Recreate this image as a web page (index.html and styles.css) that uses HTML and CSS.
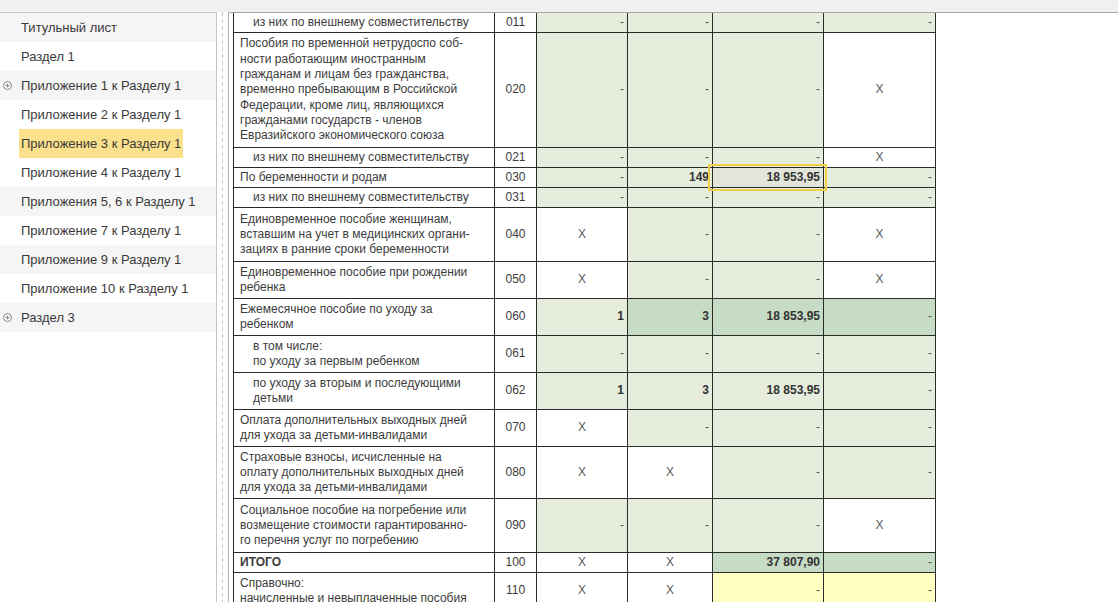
FILE: index.html
```html
<!DOCTYPE html>
<html lang="ru">
<head>
<meta charset="utf-8">
<title>Приложение 3 к Разделу 1</title>
<link rel="stylesheet" href="styles.css">
</head>
<body>
<div class="topbar"></div>
<div class="main">
  <nav class="sidebar">
    <div class="item alt"><span class="ico"></span><span class="lbl">Титульный лист</span></div>
    <div class="item"><span class="ico"></span><span class="lbl">Раздел 1</span></div>
    <div class="item alt"><span class="ico"><svg width="9" height="9" viewBox="0 0 9 9"><circle cx="4.5" cy="4.5" r="4" fill="none" stroke="#8a8a8a" stroke-width="1"/><path d="M2.5 4.5h4M4.5 2.5v4" stroke="#8a8a8a" stroke-width="1"/></svg></span><span class="lbl">Приложение 1 к Разделу 1</span></div>
    <div class="item"><span class="ico"></span><span class="lbl">Приложение 2 к Разделу 1</span></div>
    <div class="item"><span class="ico"></span><span class="lbl sel">Приложение 3 к Разделу 1</span></div>
    <div class="item"><span class="ico"></span><span class="lbl">Приложение 4 к Разделу 1</span></div>
    <div class="item alt"><span class="ico"></span><span class="lbl">Приложения 5, 6 к Разделу 1</span></div>
    <div class="item"><span class="ico"></span><span class="lbl">Приложение 7 к Разделу 1</span></div>
    <div class="item alt"><span class="ico"></span><span class="lbl">Приложение 9 к Разделу 1</span></div>
    <div class="item"><span class="ico"></span><span class="lbl">Приложение 10 к Разделу 1</span></div>
    <div class="item alt"><span class="ico"><svg width="9" height="9" viewBox="0 0 9 9"><circle cx="4.5" cy="4.5" r="4" fill="none" stroke="#8a8a8a" stroke-width="1"/><path d="M2.5 4.5h4M4.5 2.5v4" stroke="#8a8a8a" stroke-width="1"/></svg></span><span class="lbl">Раздел 3</span></div>
  </nav>
  <div class="splitter"></div>
  <div class="content">
    <table class="report">
      <colgroup>
        <col class="c-desc"><col class="c-code"><col class="c-a"><col class="c-b"><col class="c-c"><col class="c-d">
      </colgroup>
      <tbody>
        <tr class="h20">
          <td class="desc ind">из них по внешнему совместительству</td><td class="code">011</td>
          <td class="g num">-</td><td class="g num">-</td><td class="g num">-</td><td class="g num">-</td>
        </tr>
        <tr class="h115">
          <td class="desc">Пособия по временной нетрудоспо соб-<br>ности работающим иностранным<br>гражданам и лицам без гражданства,<br>временно пребывающим в Российской<br>Федерации, кроме лиц, являющихся<br>гражданами государств - членов<br>Евразийского экономического союза</td><td class="code">020</td>
          <td class="g num">-</td><td class="g num">-</td><td class="g num">-</td><td class="w x">X</td>
        </tr>
        <tr class="h20">
          <td class="desc ind">из них по внешнему совместительству</td><td class="code">021</td>
          <td class="g num">-</td><td class="g num">-</td><td class="g num">-</td><td class="w x">X</td>
        </tr>
        <tr class="h20">
          <td class="desc">По беременности и родам</td><td class="code">030</td>
          <td class="g num">-</td><td class="g num b">149</td><td class="cur num b">18 953,95</td><td class="g num">-</td>
        </tr>
        <tr class="h20">
          <td class="desc ind">из них по внешнему совместительству</td><td class="code">031</td>
          <td class="g num">-</td><td class="g num">-</td><td class="g num">-</td><td class="g num">-</td>
        </tr>
        <tr class="h54">
          <td class="desc">Единовременное пособие женщинам,<br>вставшим на учет в медицинских органи-<br>зациях в ранние сроки беременности</td><td class="code">040</td>
          <td class="w x">X</td><td class="g num">-</td><td class="g num">-</td><td class="w x">X</td>
        </tr>
        <tr class="h37">
          <td class="desc">Единовременное пособие при рождении<br>ребенка</td><td class="code">050</td>
          <td class="w x">X</td><td class="g num">-</td><td class="g num">-</td><td class="w x">X</td>
        </tr>
        <tr class="h37">
          <td class="desc">Ежемесячное пособие по уходу за<br>ребенком</td><td class="code">060</td>
          <td class="g num b">1</td><td class="dg num b">3</td><td class="dg num b">18 853,95</td><td class="dg num">-</td>
        </tr>
        <tr class="h37">
          <td class="desc ind">в том числе:<br>по уходу за первым ребенком</td><td class="code">061</td>
          <td class="g num">-</td><td class="g num">-</td><td class="g num">-</td><td class="g num">-</td>
        </tr>
        <tr class="h37">
          <td class="desc ind">по уходу за вторым и последующими<br>детьми</td><td class="code">062</td>
          <td class="g num b">1</td><td class="g num b">3</td><td class="g num b">18 853,95</td><td class="g num">-</td>
        </tr>
        <tr class="h37">
          <td class="desc">Оплата дополнительных выходных дней<br>для ухода за детьми-инвалидами</td><td class="code">070</td>
          <td class="w x">X</td><td class="g num">-</td><td class="g num">-</td><td class="g num">-</td>
        </tr>
        <tr class="h52">
          <td class="desc">Страховые взносы, исчисленные на<br>оплату дополнительных выходных дней<br>для ухода за детьми-инвалидами</td><td class="code">080</td>
          <td class="w x">X</td><td class="w x">X</td><td class="g num">-</td><td class="g num">-</td>
        </tr>
        <tr class="h54">
          <td class="desc">Социальное пособие на погребение или<br>возмещение стоимости гарантированно-<br>го перечня услуг по погребению</td><td class="code">090</td>
          <td class="g num">-</td><td class="g num">-</td><td class="g num">-</td><td class="w x">X</td>
        </tr>
        <tr class="h20">
          <td class="desc b">ИТОГО</td><td class="code">100</td>
          <td class="w x">X</td><td class="w x">X</td><td class="dg num b">37 807,90</td><td class="dg num">-</td>
        </tr>
        <tr class="h37">
          <td class="desc">Справочно:<br>начисленные и невыплаченные пособия</td><td class="code">110</td>
          <td class="w x">X</td><td class="w x">X</td><td class="y num">-</td><td class="y num">-</td>
        </tr>
      </tbody>
    </table>
  </div>
</div>
</body>
</html>
```

FILE: styles.css
```css
html, body {
  margin: 0;
  padding: 0;
  background: #ffffff;
  overflow: hidden;
}
body {
  width: 1118px;
  height: 602px;
  font-family: "Liberation Sans", Arial, sans-serif;
  color: #3c3c3c;
}
.topbar {
  height: 12px;
  background: #f0f0f0;
}
.main {
  display: flex;
  height: 590px;
}
.sidebar {
  width: 217px;
  flex: none;
  border-top: 1px solid #c8c8c8;
  border-right: 1px solid #c8c8c8;
  box-sizing: border-box;
  font-size: 13px;
  color: #3a3a3a;
}
.item {
  display: flex;
  align-items: center;
  height: 29px;
  background: #ffffff;
}
.item.alt {
  background: #f5f5f5;
}
.ico {
  width: 19px;
  flex: none;
  display: flex;
  align-items: center;
  padding-left: 3px;
  box-sizing: border-box;
}
.ico svg {
  display: block;
}
.lbl {
  display: block;
  height: 29px;
  line-height: 29px;
  padding: 0 2px;
  white-space: nowrap;
}
.lbl.sel {
  background: #fbe18c;
}
.splitter {
  width: 11px;
  flex: none;
  background-image: linear-gradient(to bottom, #c9c9c9 0, #c9c9c9 4px, transparent 4px, transparent 7px);
  background-size: 1px 7px;
  background-repeat: repeat-y;
  background-position: 5px 0;
}
.content {
  flex: 1;
  border-top: 1px solid #a6a6a6;
  border-left: 1px solid #b4b4b4;
  padding-left: 4px;
  overflow: hidden;
  background: #ffffff;
}
.report {
  border-collapse: collapse;
  table-layout: fixed;
  width: 703px;
  font-size: 12px;
  line-height: 15.3px;
  border: 1px solid #2a2a2a;
  margin-top: -1px;
}
.c-desc { width: 261px; }
.c-code { width: 42px; }
.c-a { width: 91px; }
.c-b { width: 85px; }
.c-c { width: 111px; }
.c-d { width: 112px; }
.report td {
  border: 1px solid #2a2a2a;
  padding: 0 3px;
  vertical-align: middle;
  white-space: nowrap;
  overflow: visible;
}
.h20 { height: 20px; }
.h37 { height: 37px; }
.h52 { height: 52px; }
.h54 { height: 54px; }
.h115 { height: 115px; }
.report td.desc {
  padding-left: 6px;
  color: #3c3c3c;
  background: #ffffff;
}
.report td.desc.ind {
  padding-left: 19px;
}
.report td.code {
  text-align: center;
  color: #3c3c3c;
  background: #ffffff;
}
.num {
  text-align: right;
  color: #555555;
}
.x {
  text-align: center;
  color: #5a5a5a;
}
.b {
  font-weight: bold;
  color: #333333;
}
.g { background: #e6eddd; }
.dg { background: #c6dcc4; }
.y { background: #ffffc2; }
.w { background: #ffffff; }
.cur {
  background: #e2e6da;
  position: relative;
}
.cur::after {
  content: "";
  position: absolute;
  top: -4px;
  bottom: -4px;
  left: -5px;
  right: -4px;
  border: 2px solid #f1cf4b;
  pointer-events: none;
}
```
